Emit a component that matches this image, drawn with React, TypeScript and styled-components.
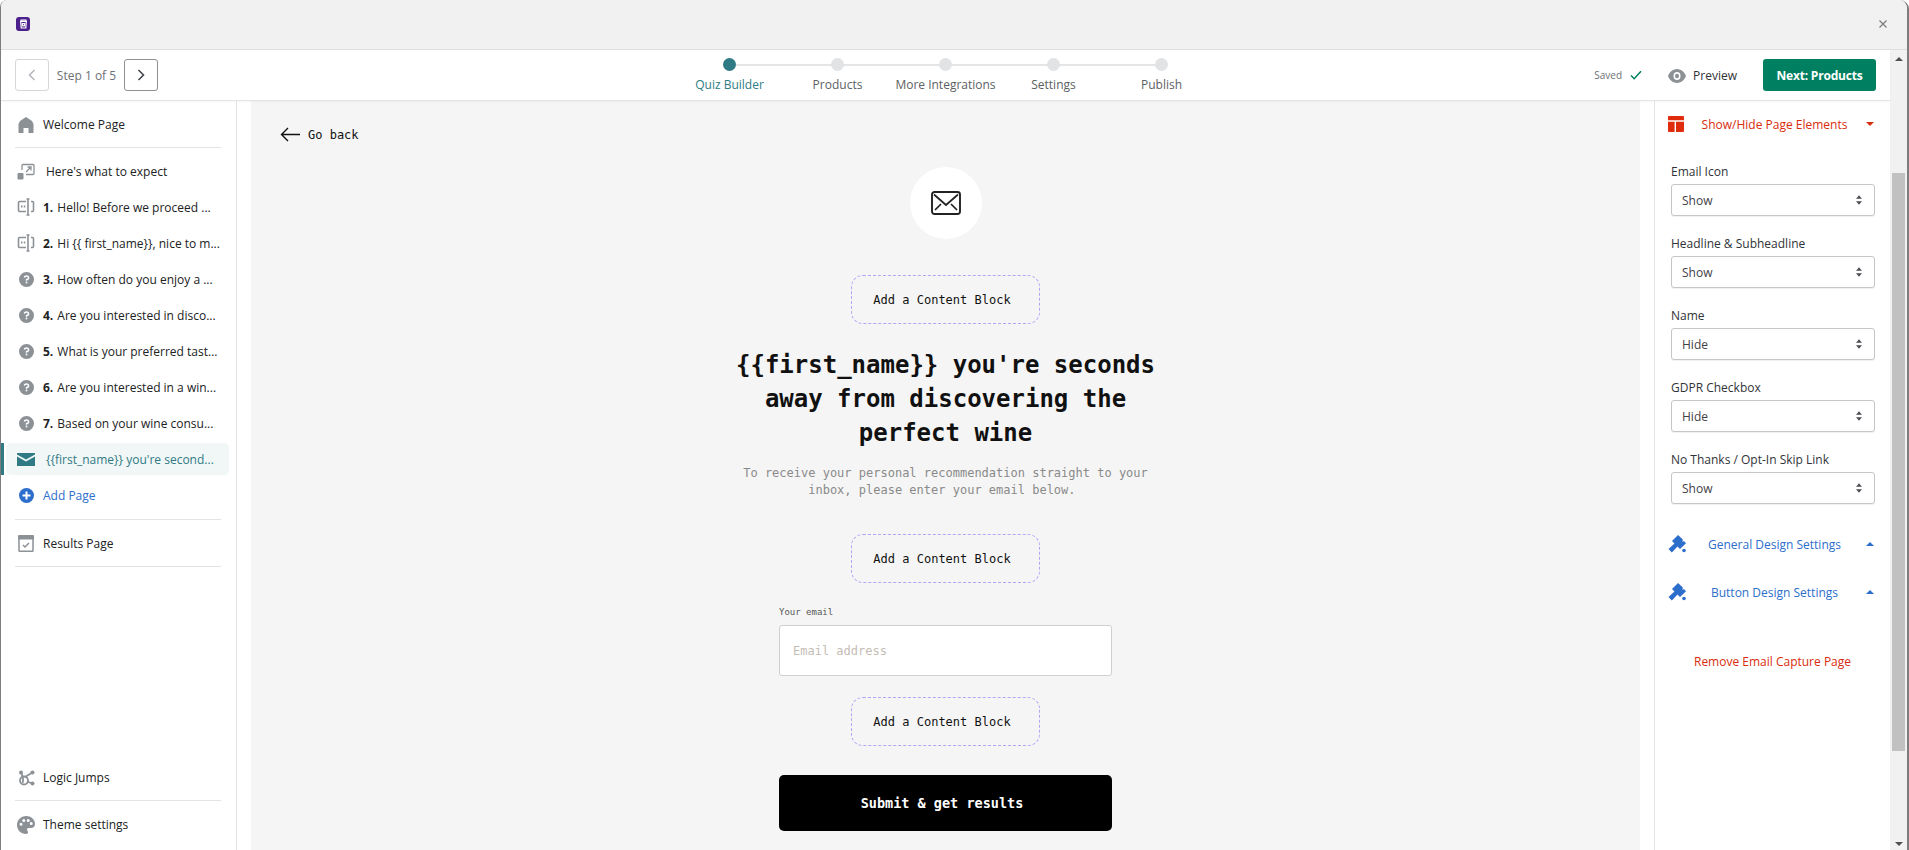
import React from "react";
import styled, { createGlobalStyle } from "styled-components";

const Global = createGlobalStyle`
  html, body { margin: 0; padding: 0; background: #fff; overflow: hidden; }
  * { box-sizing: border-box; }
  #root { width: 1909px; height: 850px; }
`;

const UI = `"Open Sans", "Noto Sans", "Liberation Sans", sans-serif`;
const MONO = `"DejaVu Sans Mono", "Liberation Mono", monospace`;

const Page = styled.div`
  width: 1909px;
  height: 850px;
  background: #fff;
  font-family: ${UI};
  overflow: hidden;
`;
const Window = styled.div`
  width: 1909px;
  height: 850px;
  display: flex;
  flex-direction: column;
  border-left: 1px solid #7d7d7d;
  border-right: 2px solid #7d7d7d;
  border-top-left-radius: 7px;
  border-top-right-radius: 9px;
  overflow: hidden;
`;
const TitleBar = styled.div`
  height: 50px;
  flex: none;
  background: #f1f1f1;
  border-bottom: 1px solid #dedede;
  display: flex;
  align-items: center;
  justify-content: space-between;
  padding: 0 19px 2px 15px;
`;
const Logo = styled.div`
  width: 14px;
  height: 14px;
  border-radius: 3px;
  background: #4b1f8c;
  display: flex;
  align-items: center;
  justify-content: center;
`;
const CloseGlyph = styled.svg`
  width: 10px;
  height: 10px;
`;
const Content = styled.div`
  flex: 1;
  min-height: 0;
  display: flex;
`;
const Main = styled.div`
  flex: 1;
  min-width: 0;
  display: flex;
  flex-direction: column;
`;
const Toolbar = styled.div`
  height: 50px;
  flex: none;
  background: #fff;
  display: grid;
  grid-template-columns: 1fr auto 1fr;
  align-items: center;
  padding: 0 14px;
  box-shadow: 0 1px 0 #e4e4e4, 0 2px 2px rgba(0,0,0,.04);
  position: relative;
  z-index: 2;
`;
const StepNav = styled.div`
  display: flex;
  align-items: center;
`;
const StepButton = styled.button<{ $disabled?: boolean }>`
  width: 34px;
  height: 32px;
  padding: 0;
  background: #fff;
  border-radius: 3px;
  border: 1px solid ${(p) => (p.$disabled ? "#d5d7da" : "#8c9196")};
  color: ${(p) => (p.$disabled ? "#b5b9bd" : "#43474b")};
  display: flex;
  align-items: center;
  justify-content: center;
`;
const StepText = styled.span`
  font-size: 12px;
  color: #6d7175;
  width: 75px;
  padding-top: 1px;
  text-align: center;
`;
const Stepper = styled.div`
  display: flex;
  align-self: start;
`;
const Step = styled.div<{ $active?: boolean; $last?: boolean }>`
  width: 108px;
  display: flex;
  flex-direction: column;
  align-items: center;
  position: relative;
  font-size: 12px;
  line-height: 16px;
  white-space: nowrap;
  color: ${(p) => (p.$active ? "#2e7d85" : "#5c5f62")};
  &::before {
    content: "";
    display: ${(p) => (p.$last ? "none" : "block")};
    position: absolute;
    left: 50%;
    width: 108px;
    top: 14px;
    height: 2px;
    background: #e4e5e7;
  }
`;
const Dot = styled.span<{ $active?: boolean }>`
  width: 13px;
  height: 13px;
  border-radius: 50%;
  background: ${(p) => (p.$active ? "#2f7a85" : "#e1e3e5")};
  margin-top: 8px;
  margin-bottom: 6px;
  position: relative;
  z-index: 1;
`;
const ToolRight = styled.div`
  display: flex;
  align-items: center;
  justify-content: flex-end;
`;
const Saved = styled.span`
  font-size: 10px;
  color: #6d7175;
  display: flex;
  align-items: center;
  gap: 8px;
  margin-right: 26px;
`;
const Preview = styled.span`
  font-size: 12px;
  color: #303337;
  display: flex;
  align-items: center;
  gap: 7px;
  padding-top: 1px;
  margin-right: 26px;
`;
const NextButton = styled.button`
  width: 113px;
  height: 32px;
  border: 0;
  border-radius: 3px;
  background: #008060;
  color: #fff;
  font-family: ${UI};
  font-size: 12px;
  font-weight: 700;
  letter-spacing: -0.2px;
  padding: 0;
`;
const Columns = styled.div`
  flex: 1;
  min-height: 0;
  display: flex;
`;
const Sidebar = styled.aside`
  width: 236px;
  flex: none;
  background: #fff;
  border-right: 1px solid #e4e5e7;
  display: flex;
  flex-direction: column;
  padding-bottom: 2px;
`;
const NavRow = styled.div<{ $active?: boolean; $color?: string }>`
  height: 36px;
  flex: none;
  display: flex;
  align-items: center;
  font-size: 12px;
  color: ${(p) => p.$color ?? "#202223"};
  white-space: nowrap;
  position: relative;
  padding-left: 15px;
  b { font-weight: 700; margin-right: 4px; }
  ${(p) =>
    p.$active
      ? `
    &::before {
      content: "";
      position: absolute;
      left: 5px; right: 7px; top: 2px; bottom: 2px;
      background: #f1f7f6;
      border-radius: 5px;
    }
    &::after {
      content: "";
      position: absolute;
      left: 0; top: 2px; bottom: 2px; width: 3px;
      background: #2f7a85;
    }
    > * { position: relative; z-index: 1; }
  `
      : ""}
`;
const WelcomeRow = styled(NavRow)`
  height: 47px;
  padding-top: 2px;
`;
const ExpectRow = styled(NavRow)`
  height: 47px;
  margin-bottom: -6px;
`;
const ResultsRow = styled(NavRow)`
  height: 46px;
`;
const BottomRow = styled(NavRow)`
  height: 47px;
`;
const LogicRow = styled(BottomRow)`
  padding-top: 2px;
`;
const NavIcon = styled.span`
  width: 20px;
  height: 20px;
  flex: none;
  display: flex;
  align-items: center;
  justify-content: center;
  margin-right: 7px;
`;
const Indent = styled.span`
  margin-left: 3px;
`;
const Rule = styled.div<{ $top?: number }>`
  height: 1px;
  flex: none;
  background: #e1e3e5;
  margin: ${(p) => p.$top ?? 0}px 15px 0 14px;
`;
const Grow = styled.div`
  flex: 1;
`;
const Canvas = styled.main`
  flex: 1;
  min-width: 0;
  background: #f5f5f5;
  margin-left: 14px;
  margin-right: 14px;
  font-family: ${MONO};
  overflow: hidden;
`;
const GoBack = styled.div`
  display: flex;
  align-items: center;
  gap: 8px;
  font-size: 12px;
  color: #111;
  padding: 22px 0 0 29px;
  height: 47px;
`;
const Stack = styled.div`
  width: 100%;
  display: flex;
  flex-direction: column;
  align-items: center;
  margin-top: 20px;
`;
const IconCircle = styled.div`
  width: 72px;
  height: 72px;
  border-radius: 50%;
  background: #fff;
  display: flex;
  align-items: center;
  justify-content: center;
`;
const AddBlock = styled.div<{ $top: number }>`
  width: 189px;
  height: 49px;
  border: 1px dashed #b3a6f5;
  border-radius: 12px;
  display: flex;
  align-items: center;
  justify-content: center;
  font-size: 12px;
  color: #111;
  padding-right: 7px;
  margin-top: ${(p) => p.$top}px;
  flex: none;
`;
const Heading = styled.h1`
  margin: 24px 0 0;
  width: 440px;
  text-align: center;
  font-family: ${MONO};
  font-size: 24px;
  line-height: 34px;
  font-weight: 700;
  color: #111;
`;
const Sub = styled.p`
  margin: 15px 0 0;
  width: 440px;
  text-align: center;
  font-size: 12px;
  line-height: 17px;
  color: #8a8a8a;
`;
const Field = styled.div`
  width: 333px;
  margin-top: 24px;
`;
const FieldLabel = styled.div`
  font-size: 9px;
  line-height: 11px;
  color: #555;
  margin-bottom: 7px;
`;
const EmailBox = styled.div`
  height: 51px;
  background: #fff;
  border: 1px solid #cfcfcf;
  border-radius: 3px;
  display: flex;
  align-items: center;
  padding-left: 13px;
  font-size: 12px;
  color: #c4bdb5;
`;
const Submit = styled.button`
  width: 333px;
  height: 56px;
  flex: none;
  margin-top: 29px;
  background: #000;
  color: #fff;
  border: 0;
  border-radius: 5px;
  font-family: ${MONO};
  font-weight: 700;
  font-size: 13.5px;
  padding: 0 7px 0 0;
`;
const Panel = styled.aside`
  width: 236px;
  flex: none;
  background: #fff;
  border-left: 1px solid #e4e5e7;
`;
const PanelHead = styled.div<{ $color: string; $top: number }>`
  height: 24px;
  margin-top: ${(p) => p.$top}px;
  display: grid;
  grid-template-columns: 21px 1fr 20px;
  align-items: center;
  padding: 0 10px 0 13px;
  color: ${(p) => p.$color};
  font-size: 12px;
  text-align: center;
  white-space: nowrap;
`;
const Caret = styled.span<{ $up?: boolean; $color: string }>`
  width: 0;
  height: 0;
  border-left: 4px solid transparent;
  border-right: 4px solid transparent;
  ${(p) =>
    p.$up
      ? `border-bottom: 4px solid ${p.$color};`
      : `border-top: 4px solid ${p.$color};`}
  justify-self: center;
`;
const Fields = styled.div`
  padding: 28px 15px 0 16px;
  display: flex;
  flex-direction: column;
  gap: 20px;
  margin-bottom: 28px;
`;
const SelectField = styled.div`
  font-size: 12px;
  color: #303337;
`;
const SelectLabel = styled.div`
  line-height: 16px;
  margin-bottom: 4px;
`;
const SelectBox = styled.div`
  height: 32px;
  border: 1px solid #c4c6c9;
  border-radius: 3px;
  box-shadow: 0 1px 0 rgba(0,0,0,.05);
  display: flex;
  align-items: center;
  justify-content: space-between;
  padding: 0 12px 0 10px;
  background: #fff;
  color: #3f4246;
`;
const RemoveLink = styled.div`
  margin-top: 49px;
  line-height: 17px;
  text-align: center;
  font-size: 12px;
  color: #d82c0d;
`;
const ScrollTrack = styled.div`
  width: 17px;
  flex: none;
  background: #f1f1f1;
  display: flex;
  flex-direction: column;
  align-items: center;
`;
const ScrollArrow = styled.span<{ $down?: boolean }>`
  width: 0;
  height: 0;
  flex: none;
  border-left: 4px solid transparent;
  border-right: 4px solid transparent;
  ${(p) =>
    p.$down
      ? "border-top: 4px solid #505050; margin-top: 91px;"
      : "border-bottom: 4px solid #505050; margin-top: 7px;"}
`;
const ScrollThumb = styled.div`
  width: 13px;
  height: 578px;
  flex: none;
  margin-top: 112px;
  background: #c1c1c1;
`;

const Help = () => (
  <svg width="15" height="15" viewBox="0 0 20 20">
    <path fill="#8c9196" fillRule="evenodd" d="M10 0a10 10 0 1 0 0 20 10 10 0 0 0 0-20zm0 15.2a1.2 1.2 0 1 1 0-2.4 1.2 1.2 0 0 1 0 2.4zm1-4.2v.7H9V10c0-.6.4-1 1-1 1 0 1.7-.5 1.7-1.3S11 6.400 10 6.400c-.9 0-1.600.5-1.800 1.400l-2-.4C6.600 5.400 8.100 4.400 10 4.400c2.200 0 3.800 1.300 3.800 3.300 0 1.700-1.100 2.900-2.800 3.300z" />
  </svg>
);
const InputIcon = () => (
  <svg width="18" height="18" viewBox="0 0 18 18" fill="none" stroke="#8c9196" strokeWidth="1.6">
    <path d="M9 3.500H2.500a1 1 0 0 0-1 1v8a1 1 0 0 0 1 1H9M14 3.500h1.500a1 1 0 0 1 1 1v8a1 1 0 0 1-1 1H14" />
    <path d="M9.500 1h3M9.500 17h3M11 1v16" />
    <path d="M4 8.500h1.500M6.800 8.500h1.500" strokeWidth="1.800" />
  </svg>
);
const Brush = () => (
  <svg width="18" height="18" viewBox="0 0 18 18">
    <path fill="#2c6ecb" d="M10 0 5 5 4 6 6.500 8.500.5 14 3.800 17.500 9.500 11.500 12 14 18 8.200 16 6 14.500 7 14.800 4.500z" />
    <circle cx="16" cy="15.500" r="1.800" fill="#2c6ecb" />
  </svg>
);
const Updown = () => (
  <svg width="6" height="10" viewBox="0 0 7 11" fill="#4b4f54">
    <path d="M3.500 0 7 4H0zM3.500 11 0 7h7z" />
  </svg>
);

const Chevron = ({ left }: { left?: boolean }) => (
  <svg width="10" height="12" viewBox="0 0 10 12" fill="none" stroke="currentColor" strokeWidth="1.600">
    <path d={left ? "M7.500 1 2.500 6l5 5" : "M2.500 1l5 5-5 5"} />
  </svg>
);

const questions: [string, string][] = [
  ["3.", "How often do you enjoy a ..."],
  ["4.", "Are you interested in disco..."],
  ["5.", "What is your preferred tast..."],
  ["6.", "Are you interested in a win..."],
  ["7.", "Based on your wine consu..."],
];
const steps = ["Quiz Builder", "Products", "More Integrations", "Settings", "Publish"];
const selects: [string, string][] = [
  ["Email Icon", "Show"],
  ["Headline & Subheadline", "Show"],
  ["Name", "Hide"],
  ["GDPR Checkbox", "Hide"],
  ["No Thanks / Opt-In Skip Link", "Show"],
];

export default function App() {
  return (
    <Page>
      <Global />
      <Window>
        <TitleBar>
          <Logo>
            <svg width="11" height="11" viewBox="0 0 11 11" fill="none" stroke="#fff" strokeWidth="1.200">
              <path d="M2 3.500h7M3 3.500V2.200h5v1.300M2.700 3.500l.5 6.500h4.600l.5-6.500" />
              <rect x="4.300" y="5.600" width="2.400" height="2.200" />
            </svg>
          </Logo>
          <CloseGlyph viewBox="0 0 10 10" fill="none" stroke="#7a7a7a" strokeWidth="1.200">
            <path d="M1.500 1.500l7 7M8.500 1.500l-7 7" />
          </CloseGlyph>
        </TitleBar>
        <Content>
          <Main>
            <Toolbar>
              <StepNav>
                <StepButton $disabled><Chevron left /></StepButton>
                <StepText>Step 1 of 5</StepText>
                <StepButton><Chevron /></StepButton>
              </StepNav>
              <Stepper>
                {steps.map((s, i) => (
                  <Step key={s} $active={i === 0} $last={i === steps.length - 1}>
                    <Dot $active={i === 0} />
                    {s}
                  </Step>
                ))}
              </Stepper>
              <ToolRight>
                <Saved>
                  Saved
                  <svg width="12" height="10" viewBox="0 0 12 10" fill="none" stroke="#008060" strokeWidth="1.500">
                    <path d="M1 5.500 4.200 8.700 11 1.200" />
                  </svg>
                </Saved>
                <Preview>
                  <svg width="18" height="14" viewBox="0 0 18 12" preserveAspectRatio="none">
                    <path fill="#8c9196" fillRule="evenodd" d="M9 0C4.500 0 1.200 3.200 0 6c1.200 2.800 4.500 6 9 6s7.800-3.200 9-6c-1.200-2.800-4.500-6-9-6zm0 9.500a3.500 3.500 0 1 1 0-7 3.500 3.500 0 0 1 0 7zM9 4a2 2 0 1 0 0 4 2 2 0 0 0 0-4z" />
                  </svg>
                  Preview
                </Preview>
                <NextButton>Next: Products</NextButton>
              </ToolRight>
            </Toolbar>
            <Columns>
              <Sidebar>
                <WelcomeRow>
                  <NavIcon>
                    <svg width="16" height="16" viewBox="0 0 15 16">
                      <path fill="#8c9196" d="M7.500 0 1.500 4 0 7v9h5v-5h5v5h5V7l-1.500-3z" />
                    </svg>
                  </NavIcon>
                  <span>Welcome Page</span>
                </WelcomeRow>
                <Rule />
                <ExpectRow>
                  <NavIcon>
                    <svg width="18" height="17" viewBox="0 0 18 17" fill="none">
                      <rect x="0.500" y="10" width="6" height="6.500" rx="1" fill="#8c9196" />
                      <path d="M5 7V2.500a1 1 0 0 1 1-1h10a1 1 0 0 1 1 1v8a1 1 0 0 1-1 1H9" stroke="#8c9196" strokeWidth="1.300" />
                      <path d="M9 9l5-5M10.500 4H14v3.500" stroke="#8c9196" strokeWidth="1.300" />
                    </svg>
                  </NavIcon>
                  <Indent>Here's what to expect</Indent>
                </ExpectRow>
                <NavRow>
                  <NavIcon><InputIcon /></NavIcon>
                  <span><b>1.</b>Hello! Before we proceed ...</span>
                </NavRow>
                <NavRow>
                  <NavIcon><InputIcon /></NavIcon>
                  <span><b>2.</b>Hi {"{{ first_name}}"}, nice to m...</span>
                </NavRow>
                {questions.map(([n, q]) => (
                  <NavRow key={n}>
                    <NavIcon><Help /></NavIcon>
                    <span><b>{n}</b>{q}</span>
                  </NavRow>
                ))}
                <NavRow $active $color="#2f7a85">
                  <NavIcon>
                    <svg width="18" height="13" viewBox="0 0 18 13" fill="#2f7a85">
                      <path d="M0 1.500V0h18v1.500L9 6.500z" />
                      <path d="M0 3.500V13h18V3.500L9 8.500z" />
                    </svg>
                  </NavIcon>
                  <Indent>{"{{first_name}} you're second..."}</Indent>
                </NavRow>
                <NavRow $color="#2c6ecb">
                  <NavIcon>
                    <svg width="15" height="15" viewBox="0 0 15 15">
                      <circle cx="7.500" cy="7.500" r="7.500" fill="#2c6ecb" />
                      <path d="M7.500 3.500v8M3.500 7.500h8" stroke="#fff" strokeWidth="2" />
                    </svg>
                  </NavIcon>
                  <span>Add Page</span>
                </NavRow>
                <Rule $top={6} />
                <ResultsRow>
                  <NavIcon>
                    <svg width="16" height="17" viewBox="0 0 16 17" fill="none">
                      <path d="M1 0h14a1 1 0 0 1 1 1v3.500H0V1a1 1 0 0 1 1-1z" fill="#8c9196" />
                      <path d="M1 4v11.500a1 1 0 0 0 .8.800h12.400a1 1 0 0 0 .8-.8V4" stroke="#8c9196" strokeWidth="1.500" />
                      <path d="M5 10l2 2 4-4" stroke="#8c9196" strokeWidth="1.500" />
                    </svg>
                  </NavIcon>
                  <span>Results Page</span>
                </ResultsRow>
                <Rule />
                <Grow />
                <LogicRow>
                  <NavIcon>
                    <svg width="17" height="16" viewBox="0 0 17 16" fill="none" stroke="#8c9196" strokeWidth="1.800">
                      <path d="M3 2.500c2 4 3 7 1.500 10.500M14.500 2.500 7 7M14.500 13.500 9 11.500" />
                      <circle cx="3" cy="2.500" r="2" fill="#8c9196" stroke="none" />
                      <circle cx="14.500" cy="2.500" r="2" fill="#8c9196" stroke="none" />
                      <circle cx="14.500" cy="13.500" r="2" fill="#8c9196" stroke="none" />
                      <circle cx="6" cy="10.500" r="4" />
                    </svg>
                  </NavIcon>
                  <span>Logic Jumps</span>
                </LogicRow>
                <Rule />
                <BottomRow>
                  <NavIcon>
                    <svg width="18" height="18" viewBox="0 0 18 18">
                      <path fill="#8c9196" fillRule="evenodd" d="M9 0C4 0 0 4 0 9s4 9 9 9c1.300 0 2-.8 2-1.700 0-1.200-1-1.600-1-2.800 0-1 .8-1.600 1.800-1.600H14c2.300 0 4-1.400 4-3.900C18 3.400 14 0 9 0zM4 9.700a1.500 1.500 0 1 1 0-3 1.500 1.500 0 0 1 0 3zm2.800-3.700a1.500 1.500 0 1 1 0-3 1.500 1.500 0 0 1 0 3zm4.400 0a1.500 1.500 0 1 1 0-3 1.500 1.500 0 0 1 0 3zm3 3a1.500 1.500 0 1 1 0-3 1.500 1.500 0 0 1 0 3z" />
                    </svg>
                  </NavIcon>
                  <span>Theme settings</span>
                </BottomRow>
              </Sidebar>
              <Canvas>
                <GoBack>
                  <svg width="20" height="15" viewBox="0 0 20 15" fill="none" stroke="#111" strokeWidth="1.400">
                    <path d="M20 7.500H1.500M8 1 1.500 7.500 8 14" />
                  </svg>
                  Go back
                </GoBack>
                <Stack>
                  <IconCircle>
                    <svg width="30" height="24" viewBox="0 0 30 24" fill="none" stroke="#222" strokeWidth="1.700">
                      <rect x="1" y="1" width="28" height="22" rx="2.500" strokeWidth="1.900" />
                      <path d="M3 3.500 15 14 27 3.500M4 19l6-6M26 19l-6-6" />
                    </svg>
                  </IconCircle>
                  <AddBlock $top={36}>Add a Content Block</AddBlock>
                  <Heading>{"{{first_name}} you're seconds away from discovering the perfect wine"}</Heading>
                  <Sub>To receive your personal recommendation straight to your inbox, please enter your email below.&nbsp;</Sub>
                  <AddBlock $top={35}>Add a Content Block</AddBlock>
                  <Field>
                    <FieldLabel>Your email</FieldLabel>
                    <EmailBox>Email address</EmailBox>
                  </Field>
                  <AddBlock $top={21}>Add a Content Block</AddBlock>
                  <Submit>Submit &amp; get results</Submit>
                </Stack>
              </Canvas>
              <Panel>
                <PanelHead $color="#d82c0d" $top={12}>
                  <svg width="16" height="16" viewBox="0 0 17 17" fill="#de2c0d">
                    <path d="M1 0h15a1 1 0 0 1 1 1v3.500H0V1a1 1 0 0 1 1-1zM0 6h7v11H1a1 1 0 0 1-1-1zM8.500 6H17v10a1 1 0 0 1-1 1H8.500z" />
                  </svg>
                  <span>Show/Hide Page Elements</span>
                  <Caret $color="#d82c0d" />
                </PanelHead>
                <Fields>
                  {selects.map(([l, v]) => (
                    <SelectField key={l}>
                      <SelectLabel>{l}</SelectLabel>
                      <SelectBox>{v}<Updown /></SelectBox>
                    </SelectField>
                  ))}
                </Fields>
                <PanelHead $color="#2c6ecb" $top={0}>
                  <Brush />
                  <span>General Design Settings</span>
                  <Caret $up $color="#2c6ecb" />
                </PanelHead>
                <PanelHead $color="#2c6ecb" $top={24}>
                  <Brush />
                  <span>Button Design Settings</span>
                  <Caret $up $color="#2c6ecb" />
                </PanelHead>
                <RemoveLink>Remove Email Capture Page</RemoveLink>
              </Panel>
            </Columns>
          </Main>
          <ScrollTrack>
            <ScrollArrow />
            <ScrollThumb />
            <ScrollArrow $down />
          </ScrollTrack>
        </Content>
      </Window>
    </Page>
  );
}
